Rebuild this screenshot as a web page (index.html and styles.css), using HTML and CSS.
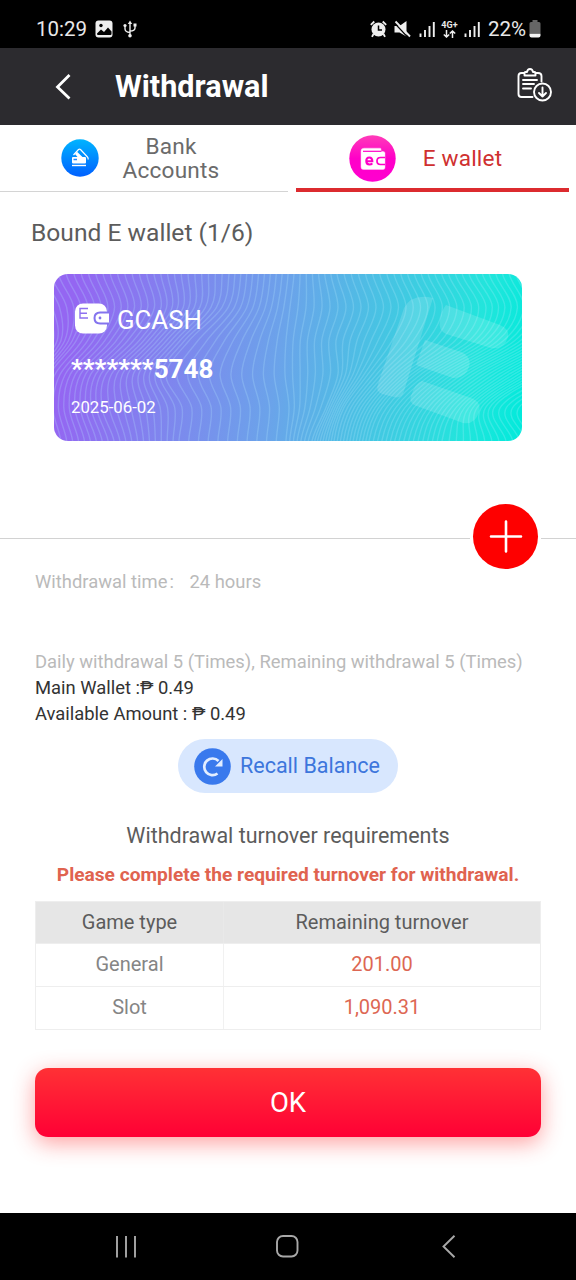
FILE: index.html
```html
<!DOCTYPE html>
<html lang="en">
<head>
<meta charset="utf-8">
<title>Withdrawal</title>
<link rel="stylesheet" href="styles.css">
</head>
<body>
<div class="status">
  <span class="clock">10:29</span>
  <svg class="st-photo" width="18" height="18" viewBox="0 0 18 18"><rect x=".5" y=".5" width="17" height="17" rx="3" fill="#eee"/><circle cx="6" cy="5.500" r="1.700" fill="#000"/><path d="M2 13.500 6 9.500l3 2.500 4-4.500 3.500 4v2.500q0 1-1 1H3q-1 0-1-1.500z" fill="#000"/></svg>
  <svg class="st-usb" width="14" height="18" viewBox="0 0 14 18" fill="none" stroke="#eee" stroke-width="1.400"><path d="M7 2v13M2 6v3q0 3 5 3.500M12 5v3q0 3-5 3"/><path d="M4.800 4 7 .5 9.200 4z" fill="#eee" stroke="none"/><circle cx="7" cy="15.700" r="1.800" fill="#eee" stroke="none"/><circle cx="2" cy="5.500" r="1.600" fill="#eee" stroke="none"/><path d="M10.500 3.500h3v3h-3z" fill="#eee" stroke="none"/></svg>
  <div class="st-right">
    <svg width="17" height="18" viewBox="0 0 17 18"><circle cx="8.500" cy="9.500" r="7" fill="#eee"/><path d="M.8 4.800 4.300 1.500M16.200 4.800l-3.500-3.300M3.500 14 2 16.800M13.500 14l1.500 2.800" stroke="#eee" stroke-width="1.800"/><path d="M8.500 5.500v4.500h3.500" fill="none" stroke="#000" stroke-width="1.500"/></svg>
    <svg class="st-mute" width="17" height="18" viewBox="0 0 17 18"><path d="M.5 6h5L12.500 1v15.500L5.500 12.500h-5z" fill="#eee"/><path d="M.5 3 14 17.500" stroke="#000" stroke-width="1.200"/><path d="M1.500 1.500 16 16.500" stroke="#eee" stroke-width="1.900"/></svg>
    <svg class="st-sig" width="16" height="17" viewBox="0 0 16 17" stroke="#eee" stroke-width="1.900"><path d="M1.500 12.500V16M6 9v7M10.500 5v11M14.800 1v15"/></svg>
    <span class="net"><b>4G+</b><svg width="13" height="8" viewBox="0 0 13 8" fill="none" stroke="#eee" stroke-width="1.500"><path d="M3.500 0v7M.8 4.500 3.500 7l2.700-2.500M9.500 8V1M6.800 3.500 9.500 1l2.700 2.500"/></svg></span>
    <svg class="st-sig2" width="16" height="17" viewBox="0 0 16 17" stroke="#eee" stroke-width="1.900"><path d="M1.500 12.500V16M6 9v7M10.500 5v11M14.800 1v15"/></svg>
    <span class="pct">22%</span>
    <svg class="st-bat" width="12" height="18" viewBox="0 0 12 18"><path d="M3.500 0h5v2H10q1.500 0 1.500 1.500v9.500H.5V3.500Q.5 2 2 2h1.500z" fill="#666"/><path d="M.5 13.500h11v2q0 2-2 2h-7q-2 0-2-2z" fill="#f4f4f4"/></svg>
  </div>
</div>

<header class="header">
  <svg class="back" width="16" height="26" viewBox="0 0 16 26" fill="none" stroke="#fff" stroke-width="2.800"><path d="M14.500 1 2.500 13 14.500 24.500"/></svg>
  <h1 class="title">Withdrawal</h1>
  <svg class="records" width="35" height="34" viewBox="0 0 35 34" fill="none" stroke="#fff" stroke-width="1.900" stroke-linecap="round" stroke-linejoin="round"><path d="M7 5H4.500Q1.500 5 1.500 8v18q0 3 3 3h11M18.500 5H21q3.500 0 3.500 3v5.500"/><path d="M7.500 7.500V5q0-1 1-1h1.500Q10.500 1 13 1t3 3h1.500q1 0 1 1v2.500z"/><path d="M6 12h14M6 16h11M6 20.500h8"/><circle cx="25.500" cy="24" r="8.500"/><path d="M25.500 19.500v9M22 25l3.500 3.500L29 25"/></svg>
</header>

<nav class="tabs">
  <div class="tab">
    <svg class="tab-bank" width="38" height="38" viewBox="0 0 38 38"><defs><linearGradient id="blue" x1="0" y1="0" x2="0" y2="1"><stop offset="0" stop-color="#00b4ff"/><stop offset="1" stop-color="#0060ff"/></linearGradient></defs><circle cx="19" cy="19" r="18.700" fill="url(#blue)"/><path d="m12.500 16 5-5.500q1-.8 2 0l7 7.500q1 1 .5 2.500" fill="none" stroke="#fff" stroke-width="1.200"/><path d="m14 15 2-2.300 5.500 5.300h-5z" fill="#fff"/><rect x="11" y="18" width="14" height="6.500" rx="1" fill="#fff"/><path d="M12.500 20.500H16" stroke="#2388ff" stroke-width="1.500"/><path d="M11 26.500h14" stroke="#fff" stroke-width="1.400"/></svg>
    <span class="tab-text">Bank<br>Accounts</span>
  </div>
  <div class="tab tab-active">
    <svg class="tab-wallet" width="47" height="47" viewBox="0 0 47 47"><defs><linearGradient id="pink" x1="0" y1="0" x2="0" y2="1"><stop offset="0" stop-color="#ff3cb8"/><stop offset=".5" stop-color="#ff00c8"/><stop offset="1" stop-color="#ff00d0"/></linearGradient></defs><circle cx="23.500" cy="23.500" r="23.200" fill="url(#pink)"/><path d="M32 16v-2q0-.8-1-.8H15q-3 0-3 2.800v16q0 2.500 2.500 2.500H34q2 0 2-2V18q0-1.500-2-1.500z" fill="#fff" stroke="#ffc8f2" stroke-width=".5"/><path d="M14 16.300H32.500" stroke="#ff00c8" stroke-width="1.200"/><path d="M36 22.500h-4.500q-3.500 0-3.500 3.500t3.500 3.500H36" fill="none" stroke="#ff00c8" stroke-width="1.700"/><path d="M17.300 26.300h6q0-3.800-3-3.800t-3 3.500 3.200 3.500q1.800 0 2.800-1.200" fill="none" stroke="#ff00c8" stroke-width="2.100"/></svg>
    <span class="tab-text">E wallet</span>
  </div>
</nav>

<main class="main">
  <h2 class="bound">Bound E wallet (1/6)</h2>
  <section class="card">
    <svg class="card-art" width="468" height="167" viewBox="0 0 468 167">
      <g id="waves" fill="none" stroke="#b9edff" stroke-opacity=".23" stroke-width="1.400"></g>
      <g fill="#fff" fill-opacity=".15"><path d="M350 34q8-15 29-10l-29 93q-2 8-10 6l-12-3q-7-3-4-10z"/><path d="m392 31 54 20q10 4 8 12-4 13-17 11l-45-14q-8-4-6-13 1-10 6-16z"/><path d="m371 66 36 12q11 5 8 15-4 12-16 11l-37-13z"/><path d="m368 107 49 17q11 4 8 14-4 13-16 11l-49-18q-5-3-3-9 4-13 11-15z"/></g>
    </svg>
    <div class="card-body">
      <div class="brand">
        <svg width="35" height="31" viewBox="0 0 35 31"><rect x="1" y=".5" width="32" height="30" rx="8" fill="#fff"/><path d="M14 5.500H6v9.500h8M6 10.200h7" fill="none" stroke="#8e70ef" stroke-width="1.400"/><path d="M35 8.500H26Q19.500 8.500 19.500 15t6.500 6.500H35" fill="#8474ee"/><path d="M35 10.500h-8.500q-5 0-5 4.500t5 4.500H35z" fill="#fff"/><circle cx="26" cy="15" r="1.400" fill="#8474ee"/></svg>
        <span class="brand-name">GCASH</span>
      </div>
      <div class="number">*******5748</div>
      <div class="date">2025-06-02</div>
    </div>
  </section>

  <div class="divider">
    <span class="rule rule-left"></span>
    <button class="add" aria-label="Add"><svg width="34" height="34" viewBox="0 0 34 34" stroke="#fff" stroke-width="2.600" stroke-linecap="round"><path d="M17 1.500v30M2 16.500h30"/></svg></button>
    <span class="rule rule-right"></span>
  </div>

  <p class="time"><span>Withdrawal time</span><span class="colon">:</span><span>24 hours</span></p>
  <p class="daily">Daily withdrawal 5 (Times), Remaining withdrawal 5 (Times)</p>
  <p class="amount">Main Wallet :<span class="peso">₱</span> 0.49</p>
  <p class="amount">Available Amount : <span class="peso">₱</span> 0.49</p>

  <button class="recall">
    <svg width="37" height="37" viewBox="0 0 37 37"><circle cx="18.500" cy="18.500" r="18.300" fill="#3979ed"/><path d="M23.500 25.500A8.300 8.300 0 1 1 24.500 13" fill="none" stroke="#e2edff" stroke-width="2.700"/><path d="M28.500 11v7.500h-7.500z" fill="#e2edff"/></svg>
    <span class="recall-text">Recall Balance</span>
  </button>

  <h3 class="req">Withdrawal turnover requirements</h3>
  <p class="warn">Please complete the required turnover for withdrawal.</p>

  <div class="table">
    <div class="row head"><span>Game type</span><span>Remaining turnover</span></div>
    <div class="row"><span>General</span><span class="val">201.00</span></div>
    <div class="row"><span>Slot</span><span class="val">1,090.31</span></div>
  </div>

  <button class="ok">OK</button>
</main>

<footer class="navbar">
  <svg width="22" height="22" viewBox="0 0 22 22" stroke="#a8a8a8" stroke-width="1.900"><path d="M2 0v21.500M11 0v21.500M20 0v21.500"/></svg>
  <svg class="nav-home" width="23" height="23" viewBox="0 0 23 23"><rect x="1" y="1" width="20.500" height="20.500" rx="6" fill="none" stroke="#a8a8a8" stroke-width="1.900"/></svg>
  <svg class="nav-back" width="14" height="23" viewBox="0 0 14 23" fill="none" stroke="#a8a8a8" stroke-width="1.900"><path d="M12.500.7 1.500 11.500l11 10.800"/></svg>
</footer>
<script src="waves.js"></script>
</body>
</html>
```

FILE: styles.css
```css
* { box-sizing: border-box; }
body {
  margin: 0;
  width: 576px;
  height: 1280px;
  display: flex;
  flex-direction: column;
  overflow: hidden;
  background: #fff;
  font-family: Roboto, "Liberation Sans", sans-serif;
  color: #5c5c5c;
}
h1, h2, h3, p { margin: 0; font-weight: 400; }
button { border: 0; padding: 0; font: inherit; }
svg { display: block; flex: none; }

.status {
  height: 48px;
  padding: 10px 35px 0 36px;
  background: #000;
  color: #e8e8e8;
  display: flex;
  align-items: center;
  font-size: 20.500px;
}
.st-photo { margin-left: 8px; }
.st-usb { margin-left: 10px; }
.st-right { margin-left: auto; display: flex; align-items: center; }
.st-mute { margin-left: 7px; }
.st-sig { margin-left: 8px; }
.st-sig2 { margin-left: 6px; }
.net { margin-left: 6px; width: 17px; font-size: 9px; line-height: 9px; display: flex; flex-direction: column; align-items: center; }
.pct { margin-left: 8px; }
.st-bat { margin-left: 3px; }

.header {
  height: 77px;
  padding: 0 24px 0 55px;
  background: #2c2b2f;
  display: flex;
  align-items: center;
}
.title { margin-left: 44px; font-size: 30.600px; font-weight: 700; color: #fff; line-height: 77px; }
.records { margin-left: auto; margin-top: -4px; }

.tabs { height: 67px; display: flex; }
.tab {
  width: 288px;
  border-bottom: 1px solid #d4d4d4;
  display: flex;
  align-items: center;
  padding-left: 61px;
}
.tab-text { width: 120px; margin-left: 12px; padding-top: 1px; text-align: center; font-size: 22.600px; line-height: 24px; letter-spacing: .2px; color: #6b6b6b; }
.tab-active { width: 273px; margin-left: 7.500px; height: 67px; border-bottom: 4px solid #dc2b2f; padding: 4px 0 0 53px; }
.tab-active .tab-text { margin-left: 7px; padding-top: 0; color: #cf3030; }

.main { height: 1021px; display: flex; flex-direction: column; }
.bound { margin: 26px 0 0 31px; font-size: 24.600px; line-height: 30px; }
.card {
  position: relative;
  margin: 26px 54px 0;
  height: 167px;
  border-radius: 14px;
  overflow: hidden;
  background: linear-gradient(99deg, #9466f2 5%, #6ba3ea 48%, #22e5dc 88%, #00eadb 100%);
  color: #fff;
}
.card-art { position: absolute; inset: 0; }
.card-body { position: relative; padding: 28px 17px; }
.brand { display: flex; align-items: center; gap: 8px; padding-left: 3px; height: 32px; margin-bottom: 21px; }
.brand-name { font-size: 25.800px; padding-top: 3px; }
.number { font-size: 26px; line-height: 28px; font-weight: 700; }
.date { margin-top: 14px; font-size: 16.800px; line-height: 20px; }

.divider { margin-top: 63px; height: 65px; display: flex; align-items: center; }
.rule { height: 1px; background: #d2d2d2; margin-top: 4px; }
.rule-left { width: 470px; }
.rule-right { width: 35px; margin-left: 3px; }
.add { width: 65px; height: 65px; margin-left: 3px; border-radius: 50%; background: #fe0000; display: flex; align-items: center; justify-content: center; }

.time { margin: 1px 0 0 35px; font-size: 18.400px; line-height: 24px; color: #bababa; display: flex; }
.colon { width: 20px; margin-left: 2px; }
.daily { margin: 56px 0 0 35px; font-size: 18.400px; line-height: 24px; color: #bababa; white-space: nowrap; }
.amount { margin-left: 35px; padding-top: 1px; font-size: 18.400px; line-height: 25px; color: #333; }

.recall {
  margin: 13px 0 0 178px;
  width: 220px;
  height: 54px;
  padding-left: 16px;
  border-radius: 27px;
  background: #d8e7fe;
  color: #3d76dc;
  display: flex;
  align-items: center;
  gap: 9px;
  font-size: 21.500px;
  white-space: nowrap;
}
.recall-text { margin-top: -2px; }
.req { margin-top: 29px; text-align: center; font-size: 21.500px; line-height: 28px; }
.warn { margin-top: 13px; text-align: center; font-size: 19.150px; line-height: 24px; font-weight: 700; color: #e0634f; }
.table { margin: 14px 35px 0; border: 1px solid #eee; }
.row { display: grid; grid-template-columns: 187px 1fr; height: 43px; font-size: 20px; line-height: 41px; text-align: center; color: #858585; border-top: 1px solid #eee; }
.row span + span { border-left: 1px solid #f1f1f1; }
.row .val { color: #dd6753; }
.head { height: 41px; background: #e6e6e6; border-top: 0; color: #5c5c5c; }
.head span + span { border-color: #e9e9e9; }
.ok {
  margin: 38px 35px 0;
  height: 69px;
  border-radius: 13px;
  background: linear-gradient(#ff3135, #ff0035);
  box-shadow: 0 6px 22px rgba(255, 45, 45, .45);
  color: #fff;
  font-size: 27.500px;
}

.navbar { height: 67px; background: #000; padding-left: 115px; display: flex; align-items: center; }
.nav-home { margin-left: 139px; }
.nav-back { margin-left: 143px; }
```

FILE: waves.js
```js
// Draws the contour pattern of the wallet card by blending between key curves.
// Each key holds the x position at six evenly spaced heights.
const keys = [
  [-50, -30, -12, -35, -55, -50],
  [20, 34, 22, -4, -12, -5],
  [100, 107, 85, 52, 48, 60],
  [175, 168, 135, 112, 128, 125],
  [240, 236, 232, 231, 235, 232],
  [283, 292, 282, 284, 272, 258],
  [340, 352, 338, 314, 290, 280],
  [415, 432, 415, 362, 328, 315],
  [462, 476, 455, 398, 360, 345],
  [560, 545, 505, 445, 402, 388],
  [640, 610, 560, 490, 440, 452],
  [700, 690, 650, 580, 502, 520]
];
const H = 167 / 5;
const steps = [9, 11, 11, 11, 7, 8, 11, 7, 9, 9, 10];
const group = document.getElementById("waves");

function curve(xs) {
  const at = i => xs[Math.max(0, Math.min(5, i))];
  let d = `M${xs[0]} 0`;
  for (let i = 0; i < 5; i++) {
    const a = at(i) + (at(i + 1) - at(i - 1)) / 6;
    const b = at(i + 1) - (at(i + 2) - at(i)) / 6;
    d += `C${a} ${(i + 1 / 3) * H} ${b} ${(i + 2 / 3) * H} ${at(i + 1)} ${(i + 1) * H}`;
  }
  return d;
}

for (let k = 0; k < keys.length - 1; k++) {
  for (let s = 0; s < steps[k]; s++) {
    const t = s / steps[k];
    const path = document.createElementNS("http://www.w3.org/2000/svg", "path");
    path.setAttribute("d", curve(keys[k].map((x, i) => x + (keys[k + 1][i] - x) * t)));
    group.appendChild(path);
  }
}
```
